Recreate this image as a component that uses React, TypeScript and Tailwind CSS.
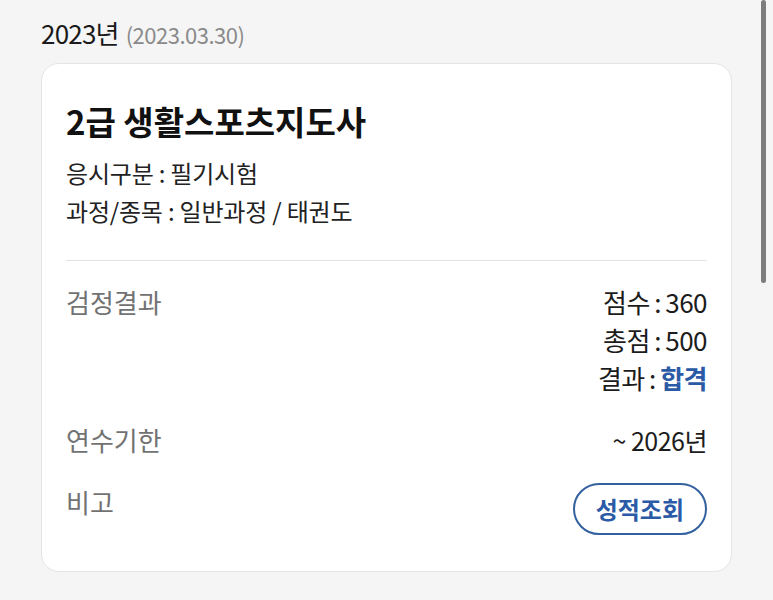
import React from 'react'

const font = { fontFamily: '"Noto Sans CJK KR", "Noto Sans", sans-serif' }

function ResultLine({ label, value, blue }: { label: string; value: string; blue?: boolean }) {
  return (
    <div className="text-[26px] leading-[38px] tracking-[-0.5px] text-[#1c1c1c] [word-spacing:-1px]">
      {label} : <span className={blue ? 'font-bold text-[#2b5aa6]' : ''}>{value}</span>
    </div>
  )
}

export default function App() {
  return (
    <div className="relative min-h-[600px] bg-[#f5f5f5] px-[41px] pt-[17px] pb-8" style={font}>
      {/* year header */}
      <div className="flex items-baseline gap-[7px] leading-[32px]">
        <span className="text-[26px] tracking-[-0.8px] text-[#1a1a1a]">2023년</span>
        <span className="text-[22px] tracking-[-0.5px] text-[#8a8a8a]">(2023.03.30)</span>
      </div>

      {/* card */}
      <div className="mt-[13px] rounded-[18px] border border-[#e4e4e4] bg-white px-6 pt-[35px] pb-[36px]">
        <h1 className="text-[33px] font-bold leading-[44px] text-[#111]">2급 생활스포츠지도사</h1>
        <div className="mt-[11px] text-[24px] leading-[38px] tracking-[-0.2px] text-[#222]">
          <p>응시구분 : 필기시험</p>
          <p>과정/종목 : 일반과정 / 태권도</p>
        </div>

        <div className="mt-[30px] h-px bg-[#e2e2e2]" />

        <div className="mt-[22px] flex flex-col gap-6">
          <div className="flex items-start justify-between">
            <span className="text-[26px] leading-[38px] text-[#727272]">검정결과</span>
            <div className="flex flex-col items-end">
              <ResultLine label="점수" value="360" />
              <ResultLine label="총점" value="500" />
              <ResultLine label="결과" value="합격" blue />
            </div>
          </div>

          <div className="flex items-start justify-between">
            <span className="text-[26px] leading-[38px] text-[#727272]">연수기한</span>
            <span className="text-[25px] leading-[38px] tracking-[-0.5px] text-[#1c1c1c]">~ 2026년</span>
          </div>

          <div className="flex items-start justify-between">
            <span className="text-[26px] leading-[38px] text-[#727272]">비고</span>
            <button className="h-[52px] rounded-full border-2 border-[#33609f] px-[21px] text-[24px] font-bold text-[#2b5aa6]">
              성적조회
            </button>
          </div>
        </div>
      </div>

      {/* overlay scrollbar */}
      <div className="absolute right-[7px] top-0 h-[283px] w-[5px] rounded-full bg-[#7d7d7d]" />
    </div>
  )
}
